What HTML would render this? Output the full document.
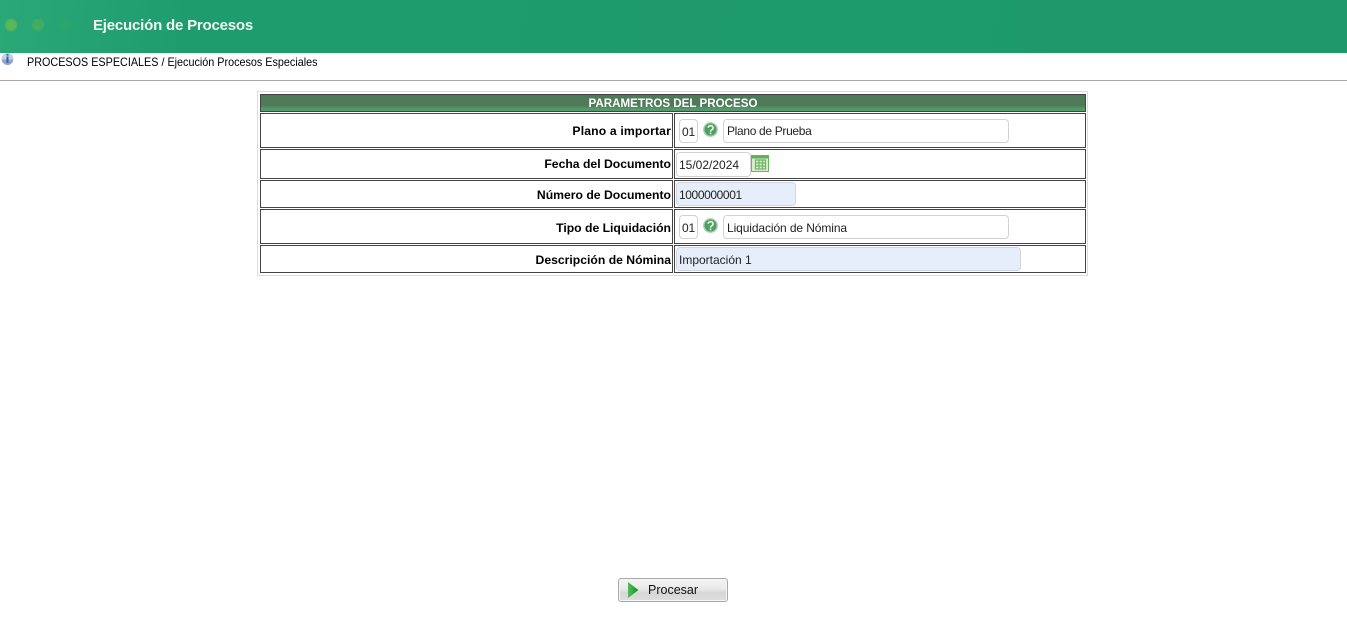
<!DOCTYPE html>
<html lang="es">
<head>
<meta charset="utf-8">
<title>Ejecución de Procesos</title>
<style>
html,body{margin:0;padding:0;background:#fff;width:1347px;height:634px;overflow:hidden;font-family:"Liberation Sans",sans-serif;font-size:12px;color:#000}
.a{position:absolute;box-sizing:border-box}
#top{left:0;top:0;width:1347px;height:53px;background:linear-gradient(100deg,#2ba878 0,#1f9c6c 190px,#1e9a6a 100%)}
.dot{border-radius:50%;width:12px;height:12px;top:19px;filter:blur(.8px)}
#title{left:93px;top:16px;font-weight:bold;font-size:15px;line-height:20px;color:#eef7f0;letter-spacing:-.2px;white-space:nowrap}
#crumb{left:27px;top:55px;line-height:15px;white-space:nowrap;color:#000;transform:scaleX(.9);transform-origin:0 0}
#line{left:0;top:80px;width:1347px;height:1px;background:#aaa}
#outer{left:257px;top:91px;width:831px;height:185px;border:1px solid #dcdcdc}
#head{left:260px;top:94px;width:826px;height:18px;border:1px solid #444;background:linear-gradient(#4f7a58 0,#4f7a58 65%,#549c6c 90%,#4f9a68 100%);color:#fff;font-weight:bold;text-align:center;line-height:17px;font-size:11.6px}
.cell{border:1px solid #444;background:#fff}
.lab{font-weight:bold;text-align:right;padding-right:1px;white-space:nowrap;font-size:12.2px}
.inp{border:1px solid #d2d2d2;border-radius:4px;background:#fff;padding-left:3px;font-size:12px;color:#222;white-space:nowrap}
.blue{background:#e6eefb;border-color:#cfd6e2}
#btn{left:618px;top:578px;width:110px;height:24px;border:1px solid #a9a9a9;border-radius:3px;background:linear-gradient(#f4f4f4 0,#e9e9e9 45%,#d6d6d6 62%,#dedede 100%);box-shadow:inset 0 0 0 1px #f4f4f4}
#btnt{left:648px;top:582px;line-height:16px;font-size:12.5px;color:#111}
svg{position:absolute;display:block}
</style>
</head>
<body>
<div class="a" id="top"></div>
<div class="a dot" style="left:5px;background:#5cb65a"></div>
<div class="a dot" style="left:32px;background:#42ad62"></div>
<div class="a dot" style="left:59px;background:#2ca56c"></div>
<div class="a" id="title">Ejecución de Procesos</div>

<svg style="left:0;top:53px" width="15" height="14" viewBox="0 0 15 14">
<circle cx="7.5" cy="6" r="6" fill="#c4d0e6"/>
<path d="M2 6.5a5.5 5.5 0 0 0 11 0z" fill="#8fa3cc"/>
<rect x="6.5" y="3.5" width="2" height="6.5" fill="#3d5ea8"/>
<rect x="6.5" y="1" width="2" height="1.6" fill="#3d5ea8"/>
</svg>
<div class="a" id="crumb">PROCESOS ESPECIALES / Ejecución Procesos Especiales</div>
<div class="a" id="line"></div>

<div class="a" id="outer"></div>
<div class="a" id="head">PARAMETROS DEL PROCESO</div>

<div class="a cell lab" style="left:260px;top:113px;width:413px;height:35px;line-height:35px;letter-spacing:.15px">Plano a importar</div>
<div class="a cell" style="left:674px;top:113px;width:412px;height:35px"></div>
<div class="a cell lab" style="left:260px;top:149px;width:413px;height:30px;line-height:28px">Fecha del Documento</div>
<div class="a cell" style="left:674px;top:149px;width:412px;height:30px"></div>
<div class="a cell lab" style="left:260px;top:180px;width:413px;height:28px;line-height:28px">Número de Documento</div>
<div class="a cell" style="left:674px;top:180px;width:413px;width:412px;height:28px"></div>
<div class="a cell lab" style="left:260px;top:209px;width:413px;height:35px;line-height:36px">Tipo de Liquidación</div>
<div class="a cell" style="left:674px;top:209px;width:412px;height:35px"></div>
<div class="a cell lab" style="left:260px;top:245px;width:413px;height:28px;line-height:28px">Descripción de Nómina</div>
<div class="a cell" style="left:674px;top:245px;width:412px;height:28px"></div>

<div class="a inp" style="left:679px;top:119px;width:19px;height:24px;line-height:24px;padding-left:2px;letter-spacing:-.2px">01</div>
<svg style="left:703px;top:122px" width="15" height="15" viewBox="0 0 15 15">
<circle cx="7.5" cy="7.5" r="7.4" fill="#a9cfb2"/>
<circle cx="7.5" cy="7.5" r="6" fill="#4f9e62"/>
<path d="M5.2 5.8a2.4 2.2 0 1 1 3.5 2c-.8.5-1.2.9-1.2 1.8" fill="none" stroke="#e6f4e8" stroke-width="1.6"/>
<rect x="6.7" y="10.5" width="1.7" height="1.7" fill="#e6f4e8"/>
</svg>
<div class="a inp" style="left:723px;top:119px;width:286px;height:24px;line-height:23px;letter-spacing:-.33px">Plano de Prueba</div>

<div class="a inp" style="left:676px;top:152px;width:75px;height:25px;line-height:25px;padding-left:2px">15/02/2024</div>
<svg style="left:751px;top:155px" width="18" height="17" viewBox="0 0 18 17">
<rect x=".5" y=".5" width="17" height="16" fill="#d8ecd0" stroke="#6cb560"/>
<rect x="1" y="1" width="16" height="2.5" fill="#62ad58"/>
<path d="M4 5h11M4 8h11M4 11h11M4 14h11M4.5 5v9.5M8 5v9.5M11.5 5v9.5M14.5 5v9.5" stroke="#6fb765" stroke-width="1.2" fill="none"/>
</svg>

<div class="a inp blue" style="left:676px;top:182px;width:120px;height:24px;line-height:25px;padding-left:2px;letter-spacing:-.4px">1000000001</div>

<div class="a inp" style="left:679px;top:215px;width:19px;height:24px;line-height:24px;padding-left:2px;letter-spacing:-.2px">01</div>
<svg style="left:703px;top:218px" width="15" height="15" viewBox="0 0 15 15">
<circle cx="7.5" cy="7.5" r="7.4" fill="#a9cfb2"/>
<circle cx="7.5" cy="7.5" r="6" fill="#4f9e62"/>
<path d="M5.2 5.8a2.4 2.2 0 1 1 3.5 2c-.8.5-1.2.9-1.2 1.8" fill="none" stroke="#e6f4e8" stroke-width="1.6"/>
<rect x="6.7" y="10.5" width="1.7" height="1.7" fill="#e6f4e8"/>
</svg>
<div class="a inp" style="left:723px;top:215px;width:286px;height:24px;line-height:24px;letter-spacing:-.1px">Liquidación de Nómina</div>

<div class="a inp blue" style="left:676px;top:247px;width:345px;height:24px;line-height:24px;padding-left:2px">Importación 1</div>

<div class="a" id="btn"></div>
<svg style="left:627px;top:581px" width="12" height="18" viewBox="0 0 12 18">
<defs><linearGradient id="g" x1="0" x2="1" y1="0" y2="0"><stop offset="0" stop-color="#58b858"/><stop offset="1" stop-color="#0a9a1a"/></linearGradient></defs>
<path d="M1 1L11.5 9L1 17z" fill="url(#g)"/>
</svg>
<div class="a" id="btnt">Procesar</div>
</body>
</html>
